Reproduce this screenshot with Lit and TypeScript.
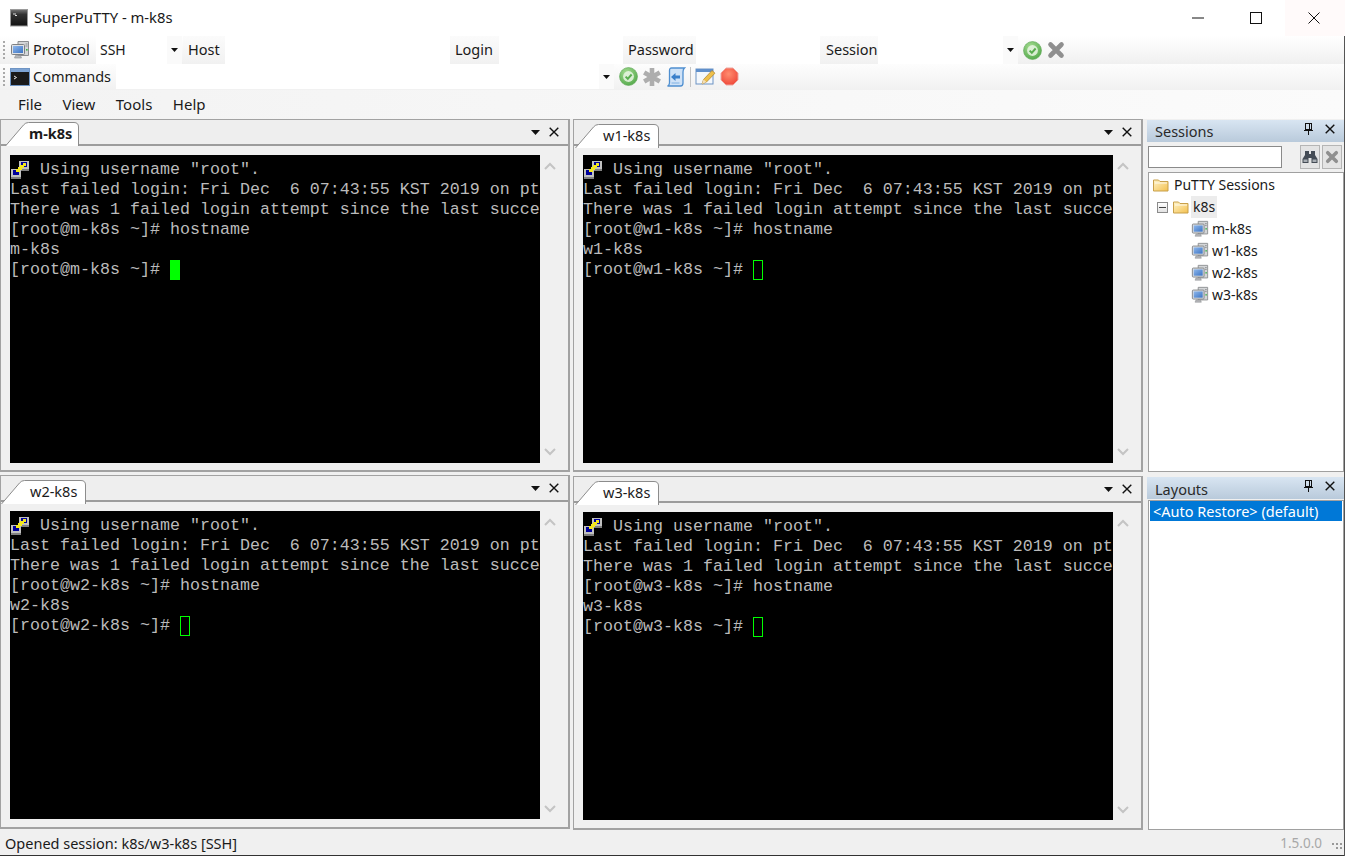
import { LitElement, html, css, svg } from "lit";
import { customElement } from "lit/decorators.js";

const pc = (s = 18) => html`<svg class="ic" width=${s} height=${s} viewBox="0 0 20 20">
  <defs><linearGradient id="scr" x1="0" y1="0" x2="1" y2="1"><stop offset="0" stop-color="#8fb8ec"/><stop offset="1" stop-color="#3c74c4"/></linearGradient></defs>
  <path d="M8 1.5h10.5v14H8z" fill="#d4d6d8" stroke="#8b8d90"/>
  <path d="M15.5 4h2M15.5 6h2" stroke="#8d9093"/><rect x="16" y="9" width="1.6" height="1.6" fill="#38b44a"/>
  <rect x="1.5" y="4.5" width="13" height="10" rx="1" fill="#dfe1e4" stroke="#7d8084"/>
  <rect x="3" y="6" width="10" height="7" fill="url(#scr)"/>
  <path d="M5.5 15.5h5l1 2.5h-7z" fill="#b6b8bb" stroke="#8b8d90" stroke-width=".6"/>
</svg>`;

const check = () => html`<svg class="ic" width="19" height="19" viewBox="0 0 19 19">
  <defs><radialGradient id="gc" cx=".4" cy=".3" r=".8"><stop offset="0" stop-color="#a5dc92"/><stop offset="1" stop-color="#4da545"/></radialGradient></defs>
  <circle cx="9.5" cy="9.5" r="9" fill="url(#gc)" stroke="#5fa858" stroke-width=".6"/>
  <circle cx="9.5" cy="9.5" r="5.4" fill="#e9f5e4" fill-opacity=".85"/>
  <path d="M6.6 9.6l2.2 2.2 3.8-4.3" fill="none" stroke="#59ad4f" stroke-width="2"/>
</svg>`;

const bigX = () => html`<svg class="ic" width="18" height="18" viewBox="0 0 18 18">
  <path d="M3.5 3.5l11 11M14.5 3.5l-11 11" stroke="#8f8f8f" stroke-width="4.6" stroke-linecap="round"/>
</svg>`;

const gear = () => html`<svg class="ic" width="20" height="20" viewBox="0 0 20 20">
  <path d="M10 1v18M2.200 5.500l15.600 9M17.800 5.500l-15.600 9" stroke="#adadad" stroke-width="4.600"/>
</svg>`;

const script = () => html`<svg class="ic" width="20" height="20" viewBox="0 0 20 20">
  <path d="M5.500 1h13c-1.200 1-1.500 2.500-1.500 4v11c0 1.500-1 3-2.500 3H1.500c1.500-.6 2-1.500 2-3V3.500c0-1.500.8-2.500 2-2.500z" fill="#cfe2f7" stroke="#4f8fd0" stroke-width="1.300"/>
  <path d="M5 10l4.500-4v2.500h4.500v3H9.500V14z" fill="#3a7fca"/>
  <path d="M5.500 16h8" stroke="#7fb0e2"/>
</svg>`;

const pencil = () => html`<svg class="ic" width="21" height="20" viewBox="0 0 21 20">
  <rect x="1" y="2" width="17" height="15" fill="#f4f8fc" stroke="#6d93c4"/>
  <rect x="1" y="2" width="17" height="3" fill="#5f8fcb"/>
  <path d="M7 17l1.500-4.500L17 3.500l3 2.700-8.500 8.800z" fill="#efc04a" stroke="#a9802c" stroke-width=".7"/>
  <path d="M7 17l1.500-4.500 3 2.500z" fill="#f4e0b8"/>
</svg>`;

const stop = () => html`<svg class="ic" width="19" height="19" viewBox="0 0 19 19">
  <defs><radialGradient id="rc" cx=".45" cy=".35" r=".8"><stop offset="0" stop-color="#ff8d70"/><stop offset="1" stop-color="#ec3c30"/></radialGradient></defs>
  <path d="M6 1h7l5 5v7l-5 5H6l-5-5V6z" fill="url(#rc)" stroke="#efa6a0"/>
</svg>`;

const tinyTerm = () => html`<svg class="ic" width="20" height="18" viewBox="0 0 20 18">
  <rect x=".5" y=".5" width="19" height="17" fill="#1a1a1a" stroke="#6f95c4"/>
  <rect x="1" y="1" width="18" height="3" fill="#7da3d3"/>
  <path d="M4 8l2.500 1.500L4 11" fill="none" stroke="#e8e8e8"/>
</svg>`;

const appIcon = () => html`<svg class="ic" width="18" height="18" viewBox="0 0 18 18">
  <defs><linearGradient id="ai" x1="0" y1="0" x2="0" y2="1"><stop offset="0" stop-color="#777"/><stop offset=".3" stop-color="#333"/><stop offset="1" stop-color="#111"/></linearGradient></defs>
  <rect x=".5" y=".5" width="17" height="16.500" fill="url(#ai)" stroke="#9a9a9a"/>
  <path d="M3 5h3M5 6.500h2" stroke="#ddd"/>
</svg>`;

const putty = () => html`<svg class="putty" width="20" height="20" viewBox="0 0 20 20" shape-rendering="crispEdges">
  <rect x="9" y="1" width="10" height="8" fill="#c0c0c0"/><rect x="11" y="2" width="6" height="5" fill="#00009a"/>
  <rect x="10" y="9" width="9" height="2" fill="#808080"/>
  <rect x="1" y="9" width="10" height="8" fill="#c0c0c0"/><rect x="3" y="10" width="6" height="5" fill="#00009a"/>
  <rect x="1" y="17" width="10" height="2" fill="#808080"/>
  <path d="M13 3h3v3h-2v2h-2v2h-2v2H6V9h2V7h2V5h3z" fill="#f4e81c"/>
</svg>`;

const folder = () => html`<svg class="ic" width="16" height="14" viewBox="0 0 16 14">
  <defs><linearGradient id="fg" x1="0" y1="0" x2="1" y2="1"><stop offset="0" stop-color="#fff4c8"/><stop offset="1" stop-color="#f3c04f"/></linearGradient></defs>
  <path d="M.5 2h5l1.500 1.500h8V13H.5z" fill="url(#fg)" stroke="#c8a04a"/>
  <path d="M2 5h12" stroke="#fff" stroke-opacity=".8"/>
</svg>`;

const ddArrow = () => html`<svg class="ic" width="7" height="4" viewBox="0 0 7 4"><path d="M0 0h7L3.500 4z" fill="#111"/></svg>`;
const tabArrow = () => html`<svg class="ic" width="9" height="5" viewBox="0 0 9 5"><path d="M0 0h9L4.500 5z" fill="#111"/></svg>`;
const smallX = () => html`<svg class="ic" width="10" height="10" viewBox="0 0 10 10"><path d="M.7.7l8.600 8.600M9.300.7L.7 9.300" stroke="#111" stroke-width="1.400"/></svg>`;
const pin = () => html`<svg class="ic" width="9" height="12" viewBox="0 0 9 12" shape-rendering="crispEdges"><path d="M1.500.5h6v6h-6zM5.500 1v5.500M0 7h9M4.500 7v5" fill="none" stroke="#111"/></svg>`;
const chev = (up: boolean) => html`<svg class="ic" width="12" height="8" viewBox="0 0 12 8"><path d=${up ? "M1 7l5-5 5 5" : "M1 1l5 5 5-5"} fill="none" stroke="#c4c4c4" stroke-width="2"/></svg>`;
const binoc = () => html`<svg class="ic" width="16" height="14" viewBox="0 0 16 14">
  <path d="M3 1h4v3h2V1h4v4l2.500 4v4H9.500V8h-3v5H.5V9L3 5z" fill="#454c55"/>
  <rect x="1.500" y="9.500" width="4" height="2.500" fill="#a8adb3"/><rect x="10.500" y="9.500" width="4" height="2.500" fill="#a8adb3"/>
</svg>`;
const smallBigX = () => html`<svg class="ic" width="14" height="14" viewBox="0 0 18 18"><path d="M3.500 3.500l11 11M14.500 3.500l-11 11" stroke="#8f8f8f" stroke-width="4.600" stroke-linecap="round"/></svg>`;

const tabShape = (w: number) => svg`<path d="M0.5 24 L18.500 3 Q20.500 .5 23.500 .5 L${w - 5} .5 Q${w - .5} .5 ${w - .5} 5 L${w - .5} 24" fill="#fff" stroke="#8c8c8c"/>`;

@customElement("term-panel")
class TermPanel extends LitElement {
  static properties = {
    host_: { attribute: false },
    active: { type: Boolean },
    pad: { type: Number },
    tw: { type: Number },
    lead: { type: Number },
  };
  host_ = "";
  active = false;
  pad = 0;
  tw = 80;
  lead = 1;

  static styles = css`
    :host { display: flex; flex-direction: column; box-sizing: border-box; border: solid #a2a2a2; border-width: 1px 2px 2px 1px; background: #f0f0f0; }
    .ic { display: block; flex: none; }
    .strip { height: 24px; flex: none; display: flex; align-items: flex-end; border-bottom: 2px solid #9c9c9c; background: #eeeeee; }
    .tab { position: relative; height: 22px; margin-bottom: -2px; display: flex; flex: none; align-items: center; }
    .tab svg { position: absolute; left: 0; top: 0; }
    .tab span { position: relative; margin-top: -1px; color: #1b1b1b; }
    .tab.active { margin-bottom: 0; }
    .tab.active span { font-weight: 700; }
    .spacer { flex: 1; }
    .ctl { display: flex; align-items: center; gap: 9px; padding-right: 9px; height: 24px; align-self: flex-start; }
    .body { flex: 1; display: flex; padding: 9px 8px 7px 9px; min-height: 0; }
    .term { width: 530px; height: 308px; flex: none; background: #000; color: #bbbbbb; font: 16.67px/20px "Liberation Mono", monospace; padding-top: 5px; box-sizing: border-box; overflow: hidden; }
    .ln { height: 20px; display: flex; white-space: pre; }
    .putty { display: block; flex: none; }
    .cur { display: block; width: 10px; height: 20px; box-sizing: border-box; border: 1px solid #00ff00; flex: none; }
    .cur.on { background: #00ff00; }
    .bar { width: 20px; flex: none; display: flex; flex-direction: column; justify-content: space-between; align-items: center; padding: 7px 0; box-sizing: border-box; }
  `;

  render() {
    const h = this.host_;
    return html`
      <div class="strip">
        <div class="tab ${this.active ? "active" : ""}" style="margin-left:${this.lead}px;width:${this.tw}px">
          <svg width=${this.tw} height="24" viewBox="0 0 ${this.tw} 24">${tabShape(this.tw)}</svg>
          <span style="margin-left:${this.pad}px">${h}</span>
        </div>
        <div class="spacer"></div>
        <div class="ctl">${tabArrow()}${smallX()}</div>
      </div>
      <div class="body">
        <div class="term">
          <div class="ln">${putty()}<span> Using username "root".</span></div>
          <div class="ln">Last failed login: Fri Dec  6 07:43:55 KST 2019 on pt</div>
          <div class="ln">There was 1 failed login attempt since the last succe</div>
          <div class="ln">[root@${h} ~]# hostname</div>
          <div class="ln">${h}</div>
          <div class="ln"><span>[root@${h} ~]# </span><span class="cur ${this.active ? "on" : ""}"></span></div>
        </div>
        <div class="bar">${chev(true)}${chev(false)}</div>
      </div>
    `;
  }
}

@customElement("app-root")
class AppRoot extends LitElement {
  static styles = css`
    :host { display: block; width: 1345px; height: 856px; overflow: hidden; background: #f0f0f0; font: 14.5px/20px "Noto Sans", sans-serif; color: #1a1a1a; position: relative; }
    .ic { display: block; flex: none; }
    .title { height: 36px; background: #fff; display: flex; align-items: center; padding-left: 10px; box-sizing: border-box; color: #1a1a1a; font-size: 14.8px; }
    .title .t { margin-left: 6px; margin-bottom: 2px; }
    .winbtns { margin-left: auto; display: flex; align-self: stretch; padding-right: 2px; background: #fffafa; }
    .wb { width: 58px; display: flex; align-items: center; justify-content: center; background: #fff; }
    .wb.close { background: #fffafa; }

    .row { display: flex; align-items: stretch; background: linear-gradient(#ffffff, #f0f0f0); box-sizing: border-box; }
    .r1 { height: 28px; }
    .r2 { height: 26px; padding-bottom: 1px; background: linear-gradient(#fdfdfd, #f1f1f1); }
    .grip { width: 10px; flex: none; display: flex; flex-direction: column; align-items: flex-start; justify-content: center; gap: 2px; padding-left: 3px; box-sizing: border-box; }
    .grip i { display: block; width: 2px; height: 2px; background: #a9a9a9; }
    .iconcell { width: 20px; flex: none; display: flex; align-items: center; justify-content: center; }
    .lbl { display: flex; align-items: center; flex: none; box-sizing: border-box; padding: 0 0 2px 5px; background: linear-gradient(#fbfbfb, #f1f1f1); }
    .plain { background: none; padding-left: 3px; }
    .inp { background: #fff; flex: none; display: flex; align-items: center; box-sizing: border-box; padding: 0 0 1px 4px; font-size: 14px; }
    .dd { flex: none; width: 15px; background: #fafafa; display: flex; align-items: center; justify-content: center; }
    .w-66 { width: 66px; } .w-86 { width: 86px; } .w-71 { width: 71px; } .w-42 { width: 42px; } .w-225 { width: 225px; }
    .w-49 { width: 49px; } .w-124 { width: 124px; } .w-73 { width: 73px; } .w-58 { width: 58px; padding-left: 6px; } .w-125 { width: 125px; }
    .w-483 { width: 483px; } .ml1 { margin-left: 1px; }
    .tools { display: flex; align-items: center; gap: 4px; padding-left: 5px; }
    .r1 .tools { gap: 5px; }
    .sep { width: 1px; height: 20px; background: #c4c4c4; }

    .menu { height: 29px; box-sizing: border-box; display: flex; align-items: center; gap: 20.5px; padding: 0 0 2px 18px; background: linear-gradient(90deg, #f3f3f3, #fbfbfb); font-size: 15px; }

    .dock { display: flex; height: 711px; }
    .col { display: flex; flex-direction: column; flex: none; }
    .left { width: 573px; }
    .mid { width: 574px; }
    .mid term-panel { margin-right: 4px; }
    .left term-panel { margin-right: 3px; }
    .p1 { height: 353px; }
    .p2 { height: 354px; margin-top: 3px; }
    .p3 { height: 354px; margin-top: 4px; }

    .side { width: 197px; }
    .dockhead { height: 22px; flex: none; display: flex; align-items: center; padding: 0 9px 0 8px; background: linear-gradient(#d8e5f2, #b9cadb); color: #2a2a2a; }
    .dockhead .n { flex: 1; }
    .lay .dockhead .n { margin-top: 1px; }
    .dockhead .c { display: flex; gap: 12px; align-items: center; margin-top: -4px; }
    .sess { height: 353px; box-sizing: border-box; padding-top: 1px; display: flex; flex-direction: column; }
    .search { display: flex; padding: 3px 1px 3px 1px; flex: none; align-items: center; }
    .search .box { width: 134px; height: 22px; box-sizing: border-box; border: 1px solid #8a8a8a; background: #fff; }
    .sbtn { width: 20px; height: 24px; box-sizing: border-box; border: 1px solid #b5b5b5; background: #e4e4e4; display: flex; align-items: center; justify-content: center; margin-left: 2px; }
    .sbtn.first { margin-left: 18px; }
    .tree { flex: 1; background: #fff; border: 1px solid #a0a0a0; box-sizing: border-box; padding: 1px 0 0 4px; margin: 0 0 0 1px; font-size: 14px; }
    .tr { height: 22px; display: flex; align-items: center; }
    .tr .tx { margin-left: 5px; }
    .l1 { padding-left: 4px; }
    .mbox { width: 11px; height: 11px; box-sizing: border-box; border: 1px solid #8b8b8b; background: linear-gradient(#fff, #e2e2e2); display: flex; align-items: center; justify-content: center; margin-right: 5px; }
    .mbox i { display: block; width: 7px; height: 1px; background: #444; }
    .hl { background: #ececec; height: 22px; padding: 0 2px; display: flex; align-items: center; margin-left: 2px; }
    .l2 { padding-left: 38px; }
    .l2 .tx { margin-left: 3px; }
    .lay { flex: 1; display: flex; flex-direction: column; margin-top: 5px; }
    .lay .list { flex: 1; background: #fff; border: 1px solid #a0a0a0; box-sizing: border-box; margin: 1px 0 0 1px; padding: 0 1px; }
    .lay .sel { height: 20px; background: #0078d7; color: #fff; display: flex; align-items: center; padding-left: 3px; }

    .status { height: 26px; box-sizing: border-box; display: flex; align-items: center; padding: 0 3px 0 5px; background: #f0f0f0; border-bottom: 1px solid #333; }
    .status .ver { margin-left: auto; color: #a8a8a8; margin-right: 10px; font-size: 13.500px; }
    .sgrip { display: grid; grid-template-columns: repeat(3, 2px); grid-auto-rows: 2px; gap: 2px; margin-top: 6px; }
    .sgrip i { display: block; background: #999; }
    .edge { position: absolute; right: 0; top: 36px; bottom: 0; width: 1px; background: #555; }
  `;

  private grip() {
    return html`<div class="grip"><i></i><i></i><i></i><i></i><i></i></div>`;
  }

  render() {
    return html`
      <div class="title">
        ${appIcon()}<span class="t">SuperPuTTY - m-k8s</span>
        <div class="winbtns">
          <div class="wb"><svg class="ic" width="12" height="2" viewBox="0 0 12 2"><path d="M0 1h12" stroke="#111"/></svg></div>
          <div class="wb"><svg class="ic" width="12" height="12" viewBox="0 0 12 12"><rect x=".5" y=".5" width="11" height="11" fill="none" stroke="#111"/></svg></div>
          <div class="wb close"><svg class="ic" width="12" height="12" viewBox="0 0 12 12"><path d="M.5.5l11 11M11.500.5l-11 11" stroke="#111"/></svg></div>
        </div>
      </div>

      <div class="row r1">
        ${this.grip()}<div class="iconcell">${pc(20)}</div>
        <div class="lbl plain w-66">Protocol</div>
        <div class="inp w-71">SSH</div><div class="dd">${ddArrow()}</div>
        <div class="lbl w-42 ml1">Host</div><div class="inp w-225"></div>
        <div class="lbl w-49">Login</div><div class="inp w-124"></div>
        <div class="lbl w-73">Password</div><div class="inp w-124"></div>
        <div class="lbl w-58">Session</div><div class="inp w-125"></div><div class="dd">${ddArrow()}</div>
        <div class="tools">${check()}${bigX()}</div>
      </div>

      <div class="row r2">
        ${this.grip()}<div class="iconcell">${tinyTerm()}</div>
        <div class="lbl plain w-86">Commands</div>
        <div class="inp w-483"></div><div class="dd">${ddArrow()}</div>
        <div class="tools">${check()}${gear()}${script()}<div class="sep"></div>${pencil()}${stop()}</div>
      </div>

      <div class="menu"><span>File</span><span>View</span><span>Tools</span><span>Help</span></div>

      <div class="dock">
        <div class="col left">
          <term-panel class="p1" .host_=${"m-k8s"} active .pad=${24} .tw=${74} .lead=${4}></term-panel>
          <term-panel class="p2" .host_=${"w2-k8s"} .pad=${29} .tw=${85} .lead=${0}></term-panel>
        </div>
        <div class="col mid">
          <term-panel class="p1" .host_=${"w1-k8s"} .pad=${28} .tw=${84} .lead=${1}></term-panel>
          <term-panel class="p3" .host_=${"w3-k8s"} .pad=${28} .tw=${84} .lead=${1}></term-panel>
        </div>
        <div class="col side">
          <div class="sess">
            <div class="dockhead"><span class="n">Sessions</span><span class="c">${pin()}${smallX()}</span></div>
            <div class="search"><div class="box"></div><div class="sbtn first">${binoc()}</div><div class="sbtn">${smallBigX()}</div></div>
            <div class="tree">
              <div class="tr">${folder()}<span class="tx">PuTTY Sessions</span></div>
              <div class="tr l1"><div class="mbox"><i></i></div>${folder()}<span class="hl">k8s</span></div>
              ${["m-k8s", "w1-k8s", "w2-k8s", "w3-k8s"].map(
                (n) => html`<div class="tr l2">${pc(18)}<span class="tx">${n}</span></div>`
              )}
            </div>
          </div>
          <div class="lay">
            <div class="dockhead"><span class="n">Layouts</span><span class="c">${pin()}${smallX()}</span></div>
            <div class="list"><div class="sel">&lt;Auto Restore&gt; (default)</div></div>
          </div>
        </div>
      </div>

      <div class="status">
        <span>Opened session: k8s/w3-k8s [SSH]</span>
        <span class="ver">1.5.0.0</span>
        <div class="sgrip"><i></i><i></i><i></i><span></span><i></i><i></i></div>
      </div>
      <div class="edge"></div>
    `;
  }
}
